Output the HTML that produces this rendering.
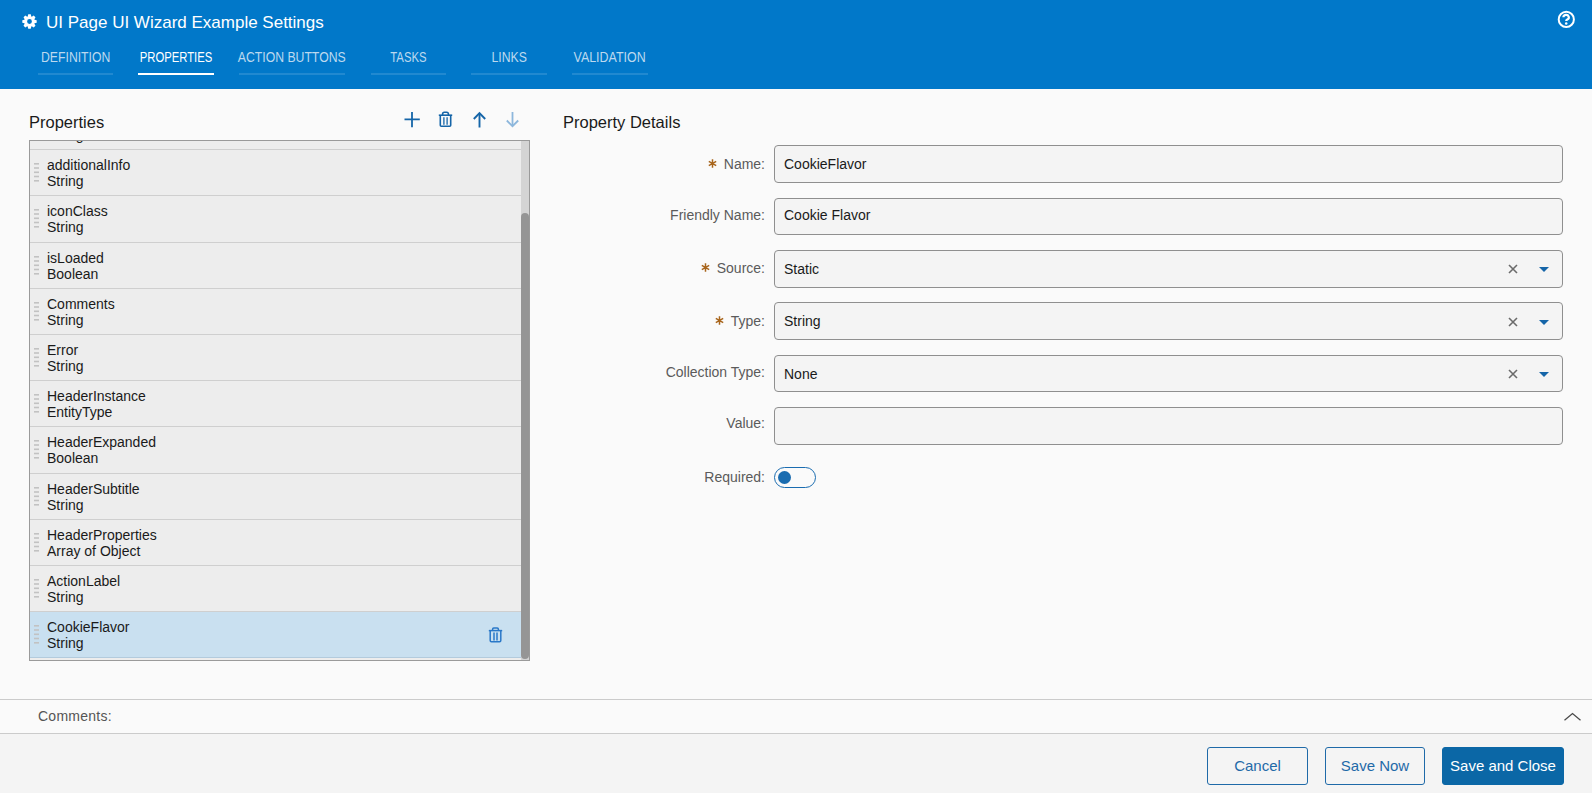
<!DOCTYPE html>
<html><head><meta charset="utf-8">
<style>
*{box-sizing:border-box;margin:0;padding:0}
html,body{width:1592px;height:793px;overflow:hidden;background:#fafafa;font-family:"Liberation Sans",sans-serif;color:#1a1a1a}
.abs{position:absolute}
.hdr{position:absolute;left:0;top:0;width:1592px;height:89px;background:#0178c9}
.title{position:absolute;left:46px;top:13px;font-size:17px;line-height:20px;color:#fff;white-space:nowrap}
.tab{position:absolute;top:49px;height:26px;display:flex;justify-content:center;font-size:14px;line-height:16px;color:#bcd9ef;text-align:center;white-space:nowrap;border-bottom:2px solid rgba(255,255,255,0.13)}
.tab.on{color:#fff;border-bottom-color:#fff}
.h2{position:absolute;font-size:16.5px;line-height:20px;color:#1a1a1a;white-space:nowrap}
.list{position:absolute;left:29px;top:140px;width:501px;height:521px;border:1px solid #9a9a9a;background:#ededed;overflow:hidden}
.row{position:absolute;left:0;width:491px;height:47px;border-top:1px solid #cfcfcf;background:#ededed}
.row .t{position:absolute;left:17px;top:6.5px;font-size:14px;line-height:16px;color:#1a1a1a;white-space:nowrap}
.row.sel{background:#c9e0f0;box-shadow:inset 0 -1px 0 #b3cbdd}
.grip{position:absolute;left:4px;top:13px;width:5px;height:20px}
.lbl{position:absolute;right:827px;font-size:14px;line-height:17px;color:#5b5b5b;white-space:nowrap;text-align:right}
.ast{position:absolute;left:-16px;top:3px}
.inp{position:absolute;left:774px;width:789px;height:37px;border:1px solid #8f8f8f;border-radius:4px;background:#f4f4f4}
.inp .v{position:absolute;left:9px;top:10px;font-size:14px;line-height:17px;color:#1a1a1a;white-space:nowrap}
.xic{position:absolute;left:733px;top:13px;width:10px;height:10px}
.car{position:absolute;left:763.8px;top:16px;width:0;height:0;border-left:5px solid transparent;border-right:5px solid transparent;border-top:5.5px solid #1565a8}
.btn{position:absolute;top:747px;height:38px;border:1px solid #1f6aa8;border-radius:3px;background:transparent;color:#1f6aa8;font-size:15px;line-height:20px;text-align:center;padding-top:7.5px;white-space:nowrap}
</style></head><body>
<div class="hdr">
  <svg class="abs" style="left:22px;top:14px" width="15" height="15" viewBox="0 0 15 15"><path fill="#fff" fill-rule="evenodd" d="M5.70 2.41 L6.23 0.31 L8.77 0.31 L9.30 2.41 L9.82 2.63 L11.69 1.52 L13.48 3.31 L12.37 5.18 L12.59 5.70 L14.69 6.23 L14.69 8.77 L12.59 9.30 L12.37 9.82 L13.48 11.69 L11.69 13.48 L9.82 12.37 L9.30 12.59 L8.77 14.69 L6.23 14.69 L5.70 12.59 L5.18 12.37 L3.31 13.48 L1.52 11.69 L2.63 9.82 L2.41 9.30 L0.31 8.77 L0.31 6.23 L2.41 5.70 L2.63 5.18 L1.52 3.31 L3.31 1.52 L5.18 2.63Z M7.5 5.1 a2.4 2.4 0 1 0 0 4.8 a2.4 2.4 0 1 0 0 -4.8z"/></svg>
  <div class="title">UI Page UI Wizard Example Settings</div>
  <svg class="abs" style="left:1557px;top:10px" width="19" height="19" viewBox="0 0 19 19"><circle cx="9.3" cy="9.4" r="7.6" fill="none" stroke="#fff" stroke-width="2"/><path d="M6.4 7.3a2.7 2.4 0 1 1 3.9 2.1c-.8.4-1.1.7-1.1 1.6" fill="none" stroke="#fff" stroke-width="2.2"/><circle cx="9.2" cy="13.5" r="1.25" fill="#fff"/></svg>
  <div class="tab" style="left:38px;width:75px"><span style="display:inline-block;transform:scaleX(0.873)">DEFINITION</span></div>
  <div class="tab on" style="left:138px;width:76px"><span style="display:inline-block;transform:scaleX(0.807)">PROPERTIES</span></div>
  <div class="tab" style="left:239px;width:106px"><span style="display:inline-block;transform:scaleX(0.874)">ACTION BUTTONS</span></div>
  <div class="tab" style="left:371px;width:75px"><span style="display:inline-block;transform:scaleX(0.81)">TASKS</span></div>
  <div class="tab" style="left:471px;width:76px"><span style="display:inline-block;transform:scaleX(0.874)">LINKS</span></div>
  <div class="tab" style="left:572px;width:76px"><span style="display:inline-block;transform:scaleX(0.888)">VALIDATION</span></div>
</div>

<div class="h2" style="left:29px;top:112px">Properties</div>
<div class="h2" style="left:563px;top:112px">Property Details</div>

<div class="list">
  <div class="row" style="top:-38px;height:47px"><svg class="grip" viewBox="0 0 5 20"><g fill="#c2c2c2"><rect x="0" y="0" width="5" height="1.6"/><rect x="0" y="4.2" width="5" height="1.6"/><rect x="0" y="8.5" width="5" height="1.6"/><rect x="0" y="12.7" width="5" height="1.6"/><rect x="0" y="17" width="5" height="1.6"/></g></svg><div class="t">Lorem<br>String</div></div>
  <div class="row" style="top:8px;height:47px"><svg class="grip" viewBox="0 0 5 20"><g fill="#c2c2c2"><rect x="0" y="0" width="5" height="1.6"/><rect x="0" y="4.2" width="5" height="1.6"/><rect x="0" y="8.5" width="5" height="1.6"/><rect x="0" y="12.7" width="5" height="1.6"/><rect x="0" y="17" width="5" height="1.6"/></g></svg><div class="t">additionalInfo<br>String</div></div>
  <div class="row" style="top:54px;height:48px"><svg class="grip" viewBox="0 0 5 20"><g fill="#c2c2c2"><rect x="0" y="0" width="5" height="1.6"/><rect x="0" y="4.2" width="5" height="1.6"/><rect x="0" y="8.5" width="5" height="1.6"/><rect x="0" y="12.7" width="5" height="1.6"/><rect x="0" y="17" width="5" height="1.6"/></g></svg><div class="t">iconClass<br>String</div></div>
  <div class="row" style="top:101px;height:47px"><svg class="grip" viewBox="0 0 5 20"><g fill="#c2c2c2"><rect x="0" y="0" width="5" height="1.6"/><rect x="0" y="4.2" width="5" height="1.6"/><rect x="0" y="8.5" width="5" height="1.6"/><rect x="0" y="12.7" width="5" height="1.6"/><rect x="0" y="17" width="5" height="1.6"/></g></svg><div class="t">isLoaded<br>Boolean</div></div>
  <div class="row" style="top:147px;height:47px"><svg class="grip" viewBox="0 0 5 20"><g fill="#c2c2c2"><rect x="0" y="0" width="5" height="1.6"/><rect x="0" y="4.2" width="5" height="1.6"/><rect x="0" y="8.5" width="5" height="1.6"/><rect x="0" y="12.7" width="5" height="1.6"/><rect x="0" y="17" width="5" height="1.6"/></g></svg><div class="t">Comments<br>String</div></div>
  <div class="row" style="top:193px;height:47px"><svg class="grip" viewBox="0 0 5 20"><g fill="#c2c2c2"><rect x="0" y="0" width="5" height="1.6"/><rect x="0" y="4.2" width="5" height="1.6"/><rect x="0" y="8.5" width="5" height="1.6"/><rect x="0" y="12.7" width="5" height="1.6"/><rect x="0" y="17" width="5" height="1.6"/></g></svg><div class="t">Error<br>String</div></div>
  <div class="row" style="top:239px;height:47px"><svg class="grip" viewBox="0 0 5 20"><g fill="#c2c2c2"><rect x="0" y="0" width="5" height="1.6"/><rect x="0" y="4.2" width="5" height="1.6"/><rect x="0" y="8.5" width="5" height="1.6"/><rect x="0" y="12.7" width="5" height="1.6"/><rect x="0" y="17" width="5" height="1.6"/></g></svg><div class="t">HeaderInstance<br>EntityType</div></div>
  <div class="row" style="top:285px;height:48px"><svg class="grip" viewBox="0 0 5 20"><g fill="#c2c2c2"><rect x="0" y="0" width="5" height="1.6"/><rect x="0" y="4.2" width="5" height="1.6"/><rect x="0" y="8.5" width="5" height="1.6"/><rect x="0" y="12.7" width="5" height="1.6"/><rect x="0" y="17" width="5" height="1.6"/></g></svg><div class="t">HeaderExpanded<br>Boolean</div></div>
  <div class="row" style="top:332px;height:47px"><svg class="grip" viewBox="0 0 5 20"><g fill="#c2c2c2"><rect x="0" y="0" width="5" height="1.6"/><rect x="0" y="4.2" width="5" height="1.6"/><rect x="0" y="8.5" width="5" height="1.6"/><rect x="0" y="12.7" width="5" height="1.6"/><rect x="0" y="17" width="5" height="1.6"/></g></svg><div class="t">HeaderSubtitle<br>String</div></div>
  <div class="row" style="top:378px;height:47px"><svg class="grip" viewBox="0 0 5 20"><g fill="#c2c2c2"><rect x="0" y="0" width="5" height="1.6"/><rect x="0" y="4.2" width="5" height="1.6"/><rect x="0" y="8.5" width="5" height="1.6"/><rect x="0" y="12.7" width="5" height="1.6"/><rect x="0" y="17" width="5" height="1.6"/></g></svg><div class="t">HeaderProperties<br>Array of Object</div></div>
  <div class="row" style="top:424px;height:47px"><svg class="grip" viewBox="0 0 5 20"><g fill="#c2c2c2"><rect x="0" y="0" width="5" height="1.6"/><rect x="0" y="4.2" width="5" height="1.6"/><rect x="0" y="8.5" width="5" height="1.6"/><rect x="0" y="12.7" width="5" height="1.6"/><rect x="0" y="17" width="5" height="1.6"/></g></svg><div class="t">ActionLabel<br>String</div></div>
  <div class="row sel" style="top:470px;height:47px"><svg class="grip" viewBox="0 0 5 20"><g fill="#c2c2c2"><rect x="0" y="0" width="5" height="1.6"/><rect x="0" y="4.2" width="5" height="1.6"/><rect x="0" y="8.5" width="5" height="1.6"/><rect x="0" y="12.7" width="5" height="1.6"/><rect x="0" y="17" width="5" height="1.6"/></g></svg><div class="t">CookieFlavor<br>String</div><svg class="abs" style="left:458px;top:15px" width="15" height="16" viewBox="0 0 15 16"><g fill="none" stroke="#2a78c8" stroke-width="1.5"><path d="M0.8 3.6h13.4"/><path d="M4.6 3.4V2.2c0-.7.5-1.2 1.2-1.2h3.4c.7 0 1.2.5 1.2 1.2v1.2"/><path d="M2.2 4v9.6c0 .7.5 1.2 1.2 1.2h8.2c.7 0 1.2-.5 1.2-1.2V4"/><path d="M6 5.5v8M9 5.5v8"/></g></svg></div>
  <div class="abs" style="left:491px;top:0;width:8px;height:519px;background:#d4d4d4"></div>
  <div class="abs" style="left:491px;top:72px;width:8px;height:446px;background:#959595;border-radius:4px"></div>
</div>
<svg class="abs" style="left:404px;top:111px" width="16" height="17" viewBox="0 0 16 17"><path d="M8 1v15.2M0.5 8.4h15.3" stroke="#1565a8" stroke-width="1.8" fill="none"/></svg>
<svg class="abs" style="left:438px;top:111px" width="15" height="17" viewBox="0 0 15 17"><g fill="none" stroke="#1565a8" stroke-width="1.6"><path d="M0.8 4.2h13.4"/><path d="M4.6 4V3c0-1 .8-1.8 1.8-1.8h2.2c1 0 1.8.8 1.8 1.8v1"/><path d="M2.3 4.8v9.5c0 .6.4 1 1 1h8.4c.6 0 1-.4 1-1V4.8"/><path d="M5.9 6.2v7.6M9.1 6.2v7.6" stroke-width="1.3"/></g></svg>
<svg class="abs" style="left:472px;top:111px" width="15" height="17" viewBox="0 0 15 17"><g fill="none" stroke="#1565a8" stroke-width="1.9"><path d="M7.5 2.5v14"/><path d="M1.8 8L7.5 2.2L13.2 8"/></g></svg>
<svg class="abs" style="left:505px;top:111px" width="15" height="17" viewBox="0 0 15 17"><g fill="none" stroke="#8db7dc" stroke-width="1.8"><path d="M7.5 1v14"/><path d="M1.8 9.5L7.5 15.2L13.2 9.5"/></g></svg>
<div class="lbl" style="top:155.5px"><svg class="ast" width="9" height="9" viewBox="0 0 9 9"><path d="M4.5 0.3v8.4M0.8 2.4l7.4 4.2M0.8 6.6l7.4-4.2" stroke="#a8651c" stroke-width="1.5" fill="none"/></svg>Name:</div>
<div class="inp" style="top:145px;height:38px"><div class="v">CookieFlavor</div></div>
<div class="lbl" style="top:206.5px">Friendly Name:</div>
<div class="inp" style="top:198px;height:37px"><div class="v" style="top:8px">Cookie Flavor</div></div>
<div class="lbl" style="top:259.5px"><svg class="ast" width="9" height="9" viewBox="0 0 9 9"><path d="M4.5 0.3v8.4M0.8 2.4l7.4 4.2M0.8 6.6l7.4-4.2" stroke="#a8651c" stroke-width="1.5" fill="none"/></svg>Source:</div>
<div class="inp" style="top:250px;height:38px"><div class="v">Static</div><svg class="xic" viewBox="0 0 10 10"><path d="M1 1L9 9M9 1L1 9" stroke="#6b6b6b" stroke-width="1.6" fill="none"/></svg><div class="car"></div></div>
<div class="lbl" style="top:313px"><svg class="ast" width="9" height="9" viewBox="0 0 9 9"><path d="M4.5 0.3v8.4M0.8 2.4l7.4 4.2M0.8 6.6l7.4-4.2" stroke="#a8651c" stroke-width="1.5" fill="none"/></svg>Type:</div>
<div class="inp" style="top:302px;height:38px"><div class="v">String</div><svg class="xic" style="top:14px" viewBox="0 0 10 10"><path d="M1 1L9 9M9 1L1 9" stroke="#6b6b6b" stroke-width="1.6" fill="none"/></svg><div class="car" style="top:17px"></div></div>
<div class="lbl" style="top:363.5px">Collection Type:</div>
<div class="inp" style="top:355px;height:37px"><div class="v">None</div><svg class="xic" viewBox="0 0 10 10"><path d="M1 1L9 9M9 1L1 9" stroke="#6b6b6b" stroke-width="1.6" fill="none"/></svg><div class="car"></div></div>
<div class="lbl" style="top:415px">Value:</div>
<div class="inp" style="top:407px;height:38px"><div class="v"></div></div>
<div class="lbl" style="top:469px">Required:</div>
<div class="abs" style="left:774px;top:467px;width:42px;height:21px;border:1.5px solid #1a6cb0;border-radius:11px"></div>
<div class="abs" style="left:778px;top:471px;width:13px;height:13px;background:#1a6cb0;border-radius:50%"></div>
<div class="abs" style="left:0;top:699px;width:1592px;height:35px;border-top:1px solid #cbcbcb;border-bottom:1px solid #cbcbcb;background:#fafafa"></div>
<div class="abs" style="left:38px;top:708px;font-size:14px;line-height:17px;color:#555;letter-spacing:0.25px">Comments:</div>
<svg class="abs" style="left:1563px;top:711px" width="19" height="11" viewBox="0 0 19 11"><path d="M1.5 9.2L9.5 2.6L17.5 9.2" fill="none" stroke="#4a4a4a" stroke-width="1.3"/></svg>
<div class="abs" style="left:0;top:734px;width:1592px;height:59px;background:#f4f4f4"></div>
<div class="btn" style="left:1207px;width:101px">Cancel</div>
<div class="btn" style="left:1325px;width:100px">Save Now</div>
<div class="btn" style="left:1442px;width:122px;background:#0b67a6;border-color:#0b67a6;color:#fff">Save and Close</div>
</body></html>
